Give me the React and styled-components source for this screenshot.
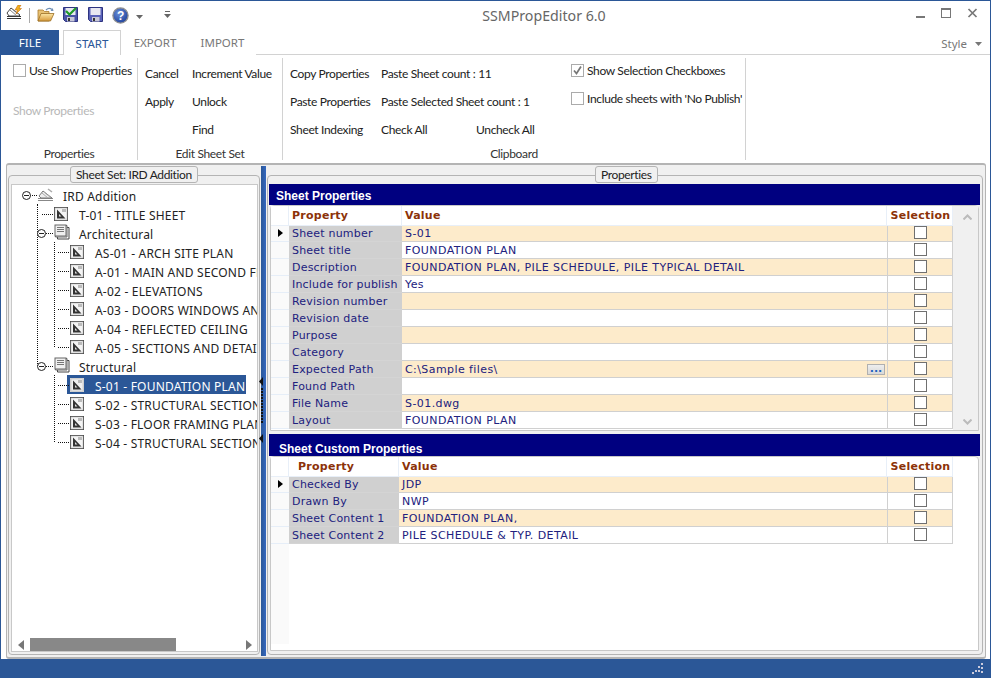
import React from "react";
import styled, { createGlobalStyle } from "styled-components";

const Global = createGlobalStyle`
  html, body { margin: 0; padding: 0; background: #fff; }
  * { box-sizing: border-box; }
`;
const UI = `Lato, "Liberation Sans", sans-serif`;
const CHROME = `"Noto Sans", "Liberation Sans", sans-serif`;
const GRID = `"DejaVu Sans", Verdana, sans-serif`;
const BLUE = "#2b5797";

const Window = styled.div`
  width: 991px; height: 678px; display: flex; flex-direction: column; overflow: hidden;
  background: #fff; border: 1px solid ${BLUE}; border-bottom: 0; font-family: ${UI}; font-size: 12px; letter-spacing: -.35px; color: #222;
`;
const TitleBar = styled.div`display: flex; align-items: flex-start; height: 29px; flex: none;`;
const Quick = styled.div`display: flex; align-items: flex-start; width: 182px; flex: none; position: relative; height: 29px;`;
const QuickIcon = styled.span`display: block; flex: none; margin-top: ${p => p.$top}px; margin-left: ${p => p.$left}px; line-height: 0;`;
const QuickSep = styled.span`width: 1px; height: 15px; background: #aaa; margin: 7px 0 0 6px; flex: none;`;
const Title = styled.div`flex: 1; text-align: center; font: 14.2px/30px ${CHROME}; letter-spacing: 0; color: #666; padding-left: 5px;`;
const Controls = styled.div`display: flex; width: 90px; flex: none; align-items: flex-start; padding-left: 15px;`;
const TabRow = styled.div`display: flex; height: 25px; flex: none; border-bottom: 1px solid #d2d2d2; align-items: stretch; font: 11.5px ${CHROME}; letter-spacing: 0;`;
const FileTab = styled.div`width: 58px; background: ${BLUE}; color: #fff; text-align: center; line-height: 25px; height: 25px;`;
const Tab = styled.div`
  line-height: 26px; height: 25px; text-align: center; width: ${p => p.$w}px; margin-left: ${p => p.$ml || 0}px;
  color: ${p => (p.$active ? "#2b5797" : "#777")};
  background: #fff;
  ${p => p.$active && `border: 1px solid #d2d2d2; border-bottom: 0;`}
`;
const StyleMenu = styled.div`margin-left: auto; display: flex; align-items: center; gap: 8px; color: #777; padding-right: 8px; height: 24px; padding-top: 3px;`;
const Ribbon = styled.div`display: flex; height: 108px; flex: none; padding-top: 3px;`;
const Group = styled.div`
  width: ${p => p.$w}px; flex: none; display: flex; flex-direction: column; height: 102px; border-right: 1px solid #d2d2d2;
`;
const GroupBody = styled.div`flex: 1; padding: ${p => p.$pad};`;
const GroupLabel = styled.div`height: 16px; line-height: 19px; text-align: center; color: #333; flex: none;`;
const ActionGrid = styled.div`display: grid; grid-template-columns: ${p => p.$cols}; grid-auto-rows: 28px;`;
const Action = styled.div`line-height: 28px; white-space: nowrap; grid-column: span ${p => p.$span || 1};`;
const CheckColumn = styled.div`grid-column: 4; grid-row: 1 / 4; display: flex; flex-direction: column; gap: 14px; padding-top: 3px;`;
const CheckRow = styled.label`display: flex; align-items: center; gap: 3px; height: 14px; white-space: nowrap;`;
const Box = styled.span`
  width: 13px; height: 13px; flex: none; display: flex; align-items: center; justify-content: center;
  background: #fff; border: 1px solid ${p => p.$dark ? "#707070" : "#ababab"};
`;
const DisabledAction = styled.div`color: #b8b8b8; margin: 27px 0 0 0; line-height: 14px;`;

const Main = styled.div`
  flex: 1; display: flex; margin: 0 4px 0 5px; background: #f0f0f0; border: 1px solid #b4b4b4; border-top-width: 2px; border-bottom-width: 2px;
  padding: 10px 0 0 1px; border-radius: 3px; height: 0;
`;
const GroupBox = styled.div`
  position: relative; flex: none; width: ${p => p.$w}px; height: 480px; border: 1px solid #b4b4b4; border-radius: 4px; display: flex; flex-direction: column;
`;
const Legend = styled.div`
  position: absolute; top: -10px; left: ${p => p.$left}px; height: 17px; padding: 0 5px; line-height: 15px;
  background: #f0f0f0; border: 1px solid #b4b4b4; border-radius: 3px; white-space: nowrap;
`;
const TreePanel = styled.div`
  margin: 8px 1px 2px 2px; flex: 1; min-height: 0; background: #fff; border: 1px solid #c8c8c8; display: flex; flex-direction: column;
  font-family: ${CHROME}; letter-spacing: .2px;
`;
const TreeScroll = styled.div`flex: 1; min-height: 0; overflow: hidden;`;
const TreeRow = styled.div`display: flex; height: 19px; padding-left: ${p => 9 + p.$level * 16}px; white-space: nowrap;`;
const Joint = styled.span`
  position: relative; width: 17px; flex: none;
  &::after { content: ""; position: absolute; left: ${p => p.$x}px; right: 1px; top: 10px; border-top: 1px dotted #111; }
`;
const Knob = styled.span`
  position: absolute; z-index: 1; left: ${p => p.$x - 4}px; top: 6px; width: 9px; height: 9px; border-radius: 50%; background: #fff; border: 1px solid #222;
  &::after { content: ""; position: absolute; left: 1px; right: 1px; top: 3px; height: 1px; background: #222; }
`;
const NodeBody = styled.span`
  display: flex; height: 19px; padding: 0 ${p => p.$sel ? "1px" : 0} 0 3px; margin-left: -3px; flex: ${p => p.$sel ? "none" : "initial"};
  background: ${p => (p.$sel ? BLUE : "transparent")}; color: ${p => (p.$sel ? "#fff" : "#222")};
`;
const NodeIcon = styled.span`width: 14px; flex: none; margin: 3px 11px 0 0; line-height: 0;`;
const NodeText = styled.span`line-height: 24px; height: 19px;`;
const Branch = styled.div`
  position: relative;
  &::before { content: ""; position: absolute; top: 0; left: ${p => p.$x}px; bottom: ${p => p.$end}px; border-left: 1px dotted #111; }
`;
const HScroll = styled.div`height: 13px; flex: none; display: flex; align-items: center; padding-left: 6px;`;
const HThumb = styled.div`width: 146px; height: 13px; background: #888; margin: 0 70px 0 6px; flex: none;`;
const Splitter = styled.div`
  position: relative; flex: none; width: 5px; height: 490px; margin: -9px 1px 0 1px;
  background: linear-gradient(90deg, #2b5797, #3568c0); display: flex; flex-direction: column; align-items: center; justify-content: center;
`;
const Grip = styled.svg`position: absolute; left: -2px; top: 210px;`;
const PropPanelBar = styled.div`
  height: ${p => p.$h}px; flex: none; margin: ${p => p.$mt}px 2px 0 1px; background: #000080; color: #fff; font: bold 12px "Liberation Sans", sans-serif; letter-spacing: 0;
  padding: ${p => p.$pt}px 0 0 ${p => p.$pl}px; line-height: 14px;
`;
const GridPanel = styled.div`
  margin: 0 3px 0 2px; background: #fff; border: 1px solid #c8c8c8; border-radius: 4px 4px 0 0; display: flex; flex: ${p => (p.$grow ? 1 : "none")}; min-height: 0;
  ${p => p.$h && `height: ${p.$h}px;`}
`;
const GridBody = styled.div`flex: none; display: flex; flex-direction: column; position: relative;`;
const GridRow = styled.div`
  display: grid; grid-template-columns: ${p => p.$cols}; height: ${p => p.$h || 17}px; font: 11px ${GRID}; letter-spacing: 0; color: #21217e;
`;
const HeadCell = styled.div`
  font-weight: bold; color: #8c3208; line-height: 19px; letter-spacing: .25px; padding-left: ${p => p.$pl || 3}px; border-right: 1px solid #e8eff8; border-bottom: 1px solid #e8eff8; background: #fff;
  ${p => p.$center && `text-align: center; padding-left: 2px;`}
  white-space: nowrap; position: relative;
`;
const RowHead = styled.div`background: #fafafa; border-bottom: 1px solid #e6eef8; display: flex; align-items: center; padding-left: 7px;`;
const PropCell = styled.div`background: #d0d0d0; line-height: 18px; letter-spacing: .2px; padding-left: 3px; white-space: nowrap; overflow: hidden; border-bottom: 1px solid #d4d4d4;`;
const ValueCell = styled.div`
  background: ${p => (p.$alt ? "#fdebcb" : "#fff")}; line-height: 18px; letter-spacing: .42px; padding: 0 2px 0 3px; border-bottom: 1px solid #d0d0d0; white-space: nowrap; overflow: hidden;
  display: flex; justify-content: space-between; align-items: flex-start;
`;
const SelCell = styled.div`
  background: ${p => (p.$alt ? "#fdebcb" : "#fff")}; border-left: 1px solid #d0d0d0; border-right: 1px solid #d0d0d0; border-bottom: 1px solid #d0d0d0; display: flex; justify-content: center; align-items: flex-start; padding: 1px 0 0 0;
`;
const EllipsisButton = styled.span`
  width: 18px; height: 11px; flex: none; margin-top: 3px; background: linear-gradient(#eee, #d8d8d8); border: 1px solid #b0b0b0; color: #1f63c0; font: bold 11px ${GRID}; line-height: 8px; text-align: center; letter-spacing: 0;
`;
const VScroll = styled.div`flex: 1; background: #f0f0f0; display: flex; flex-direction: column; justify-content: space-between; align-items: center; padding: 8px 0 5px 3px;`;
const RowStrip = styled.div`
  position: absolute; top: 87px; left: 0; width: 18px; bottom: 6px; background: #fafafa;
`;
const Status = styled.div`height: 19px; flex: none; background: ${BLUE}; display: flex; justify-content: flex-end; align-items: flex-end; padding: 0 6px 3px 0; line-height: 0;`;
const BottomGap = styled.div`height: 3px; flex: none;`;

const Chk = () => (
  <svg width="11" height="11" viewBox="0 0 11 11"><path d="M2 5.5 L4.5 8.5 L9 1.5" fill="none" stroke="#777" strokeWidth="1.7" /></svg>
);
const AppIcon = () => (
  <svg width="17" height="15" viewBox="0 0 17 15">
    <path d="M1 13.5h14M1 11.5h14" stroke="#333" strokeWidth="1" />
    <path d="M1 8 L5 3 L14 10 L13 11 H3 Z" fill="#fff" stroke="#444" />
    <path d="M4 5 L11 11 M6 4 L12 9" stroke="#888" />
    <path d="M12 0 L9 5 L11.5 5 L10 9 L15.5 3.5 L13 3.5 L15 0 Z" fill="#f0b020" stroke="#c06000" strokeWidth=".5" />
  </svg>
);
const FolderIcon = () => (
  <svg width="18" height="15" viewBox="0 0 18 15">
    <defs><linearGradient id="fg" x1="0" y1="0" x2="0" y2="1"><stop offset="0" stopColor="#fbe6a6" /><stop offset="1" stopColor="#d89a3a" /></linearGradient></defs>
    <path d="M1 3 H6 L7.5 4.5 H12 V14 H1 Z" fill="#e8c274" stroke="#a97a2c" strokeWidth=".8" />
    <path d="M1 14 L4 6.5 H17 L13.5 14 Z" fill="url(#fg)" stroke="#9a6e24" strokeWidth=".8" />
    <path d="M9 3 Q12 0 15 2.5" fill="none" stroke="#6f8fb5" strokeWidth="1.2" />
    <path d="M13.5 4 L16.5 4 L15.8 1 Z" fill="#6f8fb5" />
  </svg>
);
const Floppy = ({ check }) => (
  <svg width="15" height="15" viewBox="0 0 15 15">
    <path d="M.5 .5 H14.5 V14.5 H2.5 L.5 12.5 Z" fill={check ? "#4a54a8" : "#5a62b8"} stroke="#2d3380" />
    <rect x="2.5" y="1" width="10" height="7" fill="#e8e8f0" />
    <rect x="4" y="10" width="7.5" height="4.5" fill="#c8c8d8" />
    <rect x="5" y="11" width="2" height="3" fill="#333" />
    {check && <path d="M3 4 L6.5 7.5 L13 1" fill="none" stroke="#1f9a28" strokeWidth="2.2" />}
  </svg>
);
const HelpIcon = () => (
  <svg width="17" height="17" viewBox="0 0 17 17">
    <defs><radialGradient id="hg" cx=".4" cy=".35" r=".7"><stop offset="0" stopColor="#6a90d8" /><stop offset="1" stopColor="#1d3f9a" /></radialGradient></defs>
    <circle cx="8.5" cy="8.5" r="7.6" fill="url(#hg)" stroke="#8f8f8f" strokeWidth="1.3" />
    <text x="8.5" y="13" textAnchor="middle" fontFamily="Liberation Sans, sans-serif" fontWeight="bold" fontSize="12" fill="#fff">?</text>
  </svg>
);
const Caret = ({ c = "#666", w = 7 }) => (
  <svg width={w} height="4" viewBox="0 0 7 4"><path d="M0 0H7L3.5 4Z" fill={c} /></svg>
);
const Customize = () => (
  <svg width="7" height="7" viewBox="0 0 7 7"><path d="M1 .5H6" stroke="#666" /><path d="M0 3H7L3.5 7Z" fill="#666" /></svg>
);
const WinMin = () => <svg width="25" height="20" viewBox="0 0 25 20" style={{ display: "block" }}><rect x="1" y="15" width="9" height="2" fill="#777" /></svg>;
const WinMax = () => <svg width="27" height="20" viewBox="0 0 27 20" style={{ display: "block" }}><rect x="1.5" y="7.5" width="9" height="9" fill="none" stroke="#777" /><rect x="1" y="7" width="10" height="2" fill="#777" /></svg>;
const WinClose = () => <svg width="12" height="20" viewBox="0 0 12 20" style={{ display: "block" }}><path d="M1.5 8 L9.5 16 M9.5 8 L1.5 16" stroke="#777" strokeWidth="1.7" /></svg>;
const SheetIcon = ({ sel }) => (
  <svg width="14" height="14" viewBox="0 0 14 14">
    <rect x=".5" y=".5" width="13" height="13" fill="#f4f4f4" stroke={sel ? "#d8d8d8" : "#444"} />
    <rect x="1" y="1" width="12" height="12" fill={sel ? "#f0f0f0" : "#f4f4f4"} stroke="#bbb" strokeWidth=".6" />
    <path d="M3 2.5 V11.5 H11.5 Z" fill="#333" />
    <path d="M5 7 V9.5 H7.5 Z" fill="#ddd" />
    <rect x="8" y="2" width="4" height="3" fill="#bbb" />
  </svg>
);
const StackIcon = () => (
  <svg width="16" height="16" viewBox="0 0 16 16" style={{ marginTop: -2 }}>
    <path d="M3.5 3.5 H15 V15 H3.5 Z" fill="#fff" stroke="#444" />
    <path d="M1.5 1.5 H13 V13 H1.5 Z" fill="#fff" stroke="#666" />
    <rect x="1" y="1" width="11" height="11" fill="#f0f0f0" stroke="#666" />
    <path d="M3 3.5 H10 M3 5.5 H10 M3 7.5 H10" stroke="#777" />
  </svg>
);
const RootIcon = () => (
  <svg width="16" height="14" viewBox="0 0 16 14">
    <path d="M0 12.5H15M0 10.5H15" stroke="#888" />
    <path d="M1 8 L5 3 L14 10 H3 Z" fill="#eee" stroke="#777" />
    <path d="M4 5 L10 10 M6 4 L12 9" stroke="#aaa" />
    <path d="M10 1 L14 4" stroke="#aaa" strokeWidth="1.5" />
  </svg>
);
const Arrow = ({ dir }) => (
  <svg width="6" height="10" viewBox="0 0 6 10" style={{ flex: "none" }}><path d={dir === "left" ? "M6 0V10L0 5Z" : "M0 0V10L6 5Z"} fill="#777" /></svg>
);
const Chev = ({ up }) => (
  <svg width="9" height="6" viewBox="0 0 9 6"><path d={up ? "M.5 5.5 L4.5 1.5 L8.5 5.5" : "M.5 .5 L4.5 4.5 L8.5 .5"} fill="none" stroke="#bbb" strokeWidth="2" /></svg>
);
const RowMark = () => <svg width="5" height="8" viewBox="0 0 5 8"><path d="M0 0V8L5 4Z" fill="#000" /></svg>;

const archSheets = ["AS-01 - ARCH SITE PLAN", "A-01 - MAIN AND SECOND FLOOR PLANS", "A-02 - ELEVATIONS", "A-03 - DOORS WINDOWS AND DETAILS", "A-04 - REFLECTED CEILING", "A-05 - SECTIONS AND DETAILS"];
const structSheets = ["S-01 - FOUNDATION PLAN", "S-02 - STRUCTURAL SECTIONS", "S-03 - FLOOR FRAMING PLAN", "S-04 - STRUCTURAL SECTIONS"];

const SheetNode = ({ level, name, sel }) => (
  <TreeRow $level={level}>
    <Joint $x={5} />
    <NodeBody $sel={sel}>
      <NodeIcon><SheetIcon sel={sel} /></NodeIcon>
      <NodeText>{name}</NodeText>
    </NodeBody>
  </TreeRow>
);
const GroupNode = ({ level, name, icon, x }) => (
  <TreeRow $level={level}>
    <Joint $x={x}><Knob $x={x} /></Joint>
    <NodeBody>
      <NodeIcon>{icon}</NodeIcon>
      <NodeText>{name}</NodeText>
    </NodeBody>
  </TreeRow>
);

const sheetProps = [
  ["Sheet number", "S-01"],
  ["Sheet title", "FOUNDATION PLAN"],
  ["Description", "FOUNDATION PLAN, PILE SCHEDULE, PILE TYPICAL DETAIL"],
  ["Include for publish", "Yes"],
  ["Revision number", ""],
  ["Revision date", ""],
  ["Purpose", ""],
  ["Category", ""],
  ["Expected Path", "C:\\Sample files\\", true],
  ["Found Path", ""],
  ["File Name", "S-01.dwg"],
  ["Layout", "FOUNDATION PLAN"],
];
const customProps = [
  ["Checked By", "JDP"],
  ["Drawn By", "NWP"],
  ["Sheet Content 1", "FOUNDATION PLAN,"],
  ["Sheet Content 2", "PILE SCHEDULE & TYP. DETAIL"],
];
const topCols = "18px 113px 485px 66px";
const customCols = "18px 110px 488px 66px";

const DataRows = ({ rows, cols }) => rows.map(([k, v, more], i) => (
  <GridRow $cols={cols} key={k}>
    <RowHead>{i === 0 && <RowMark />}</RowHead>
    <PropCell>{k}</PropCell>
    <ValueCell $alt={i % 2 === 0}>{v}{more && <EllipsisButton>...</EllipsisButton>}</ValueCell>
    <SelCell $alt={i % 2 === 0}><Box $dark /></SelCell>
  </GridRow>
));

export default function App() {
  return (
    <>
      <Global />
      <Window>
        <TitleBar>
          <Quick>
            <QuickIcon $top={4} $left={5}><AppIcon /></QuickIcon>
            <QuickSep />
            <QuickIcon $top={6} $left={7}><FolderIcon /></QuickIcon>
            <QuickIcon $top={6} $left={8}><Floppy check /></QuickIcon>
            <QuickIcon $top={6} $left={10}><Floppy /></QuickIcon>
            <QuickIcon $top={6} $left={9}><HelpIcon /></QuickIcon>
            <QuickIcon $top={14} $left={7}><Caret /></QuickIcon>
            <QuickIcon $top={10} $left={21}><Customize /></QuickIcon>
          </Quick>
          <Title>SSMPropEditor 6.0</Title>
          <Controls><WinMin /><WinMax /><WinClose /></Controls>
        </TitleBar>
        <TabRow>
          <FileTab>FILE</FileTab>
          <Tab $active $w={58} $ml={4}>START</Tab>
          <Tab $w={68}>EXPORT</Tab>
          <Tab $w={67}>IMPORT</Tab>
          <StyleMenu>Style <Caret c="#777" /></StyleMenu>
        </TabRow>
        <Ribbon>
          <Group $w={137}>
            <GroupBody $pad="5px 0 0 12px">
              <CheckRow><Box /><span>Use Show Properties</span></CheckRow>
              <DisabledAction>Show Properties</DisabledAction>
            </GroupBody>
            <GroupLabel>Properties</GroupLabel>
          </Group>
          <Group $w={145}>
            <GroupBody $pad="2px 0 0 7px">
              <ActionGrid $cols="47px 1fr">
                <Action>Cancel</Action><Action>Increment Value</Action>
                <Action>Apply</Action><Action>Unlock</Action>
                <span /><Action>Find</Action>
              </ActionGrid>
            </GroupBody>
            <GroupLabel>Edit Sheet Set</GroupLabel>
          </Group>
          <Group $w={463}>
            <GroupBody $pad="2px 0 0 7px">
              <ActionGrid $cols="91px 95px 95px 1fr">
                <Action>Copy Properties</Action><Action $span={2}>Paste Sheet count : 11</Action>
                <CheckColumn>
                  <CheckRow><Box><Chk /></Box><span>Show Selection Checkboxes</span></CheckRow>
                  <CheckRow><Box /><span>Include sheets with 'No Publish'</span></CheckRow>
                </CheckColumn>
                <Action>Paste Properties</Action><Action $span={2}>Paste Selected Sheet count : 1</Action>
                <Action>Sheet Indexing</Action><Action>Check All</Action><Action>Uncheck All</Action>
              </ActionGrid>
            </GroupBody>
            <GroupLabel>Clipboard</GroupLabel>
          </Group>
        </Ribbon>
        <Main>
          <GroupBox $w={252}>
            <Legend $left={61}>Sheet Set: IRD Addition</Legend>
            <TreePanel>
              <TreeScroll>
                <GroupNode level={0} x={5} name="IRD Addition" icon={<RootIcon />} />
                <Branch $x={25} $end={85}>
                  <SheetNode level={1} name="T-01 - TITLE SHEET" />
                  <GroupNode level={1} x={4} name="Architectural" icon={<StackIcon />} />
                  <Branch $x={42} $end={9}>
                    {archSheets.map(n => <SheetNode key={n} level={2} name={n} />)}
                  </Branch>
                  <GroupNode level={1} x={4} name="Structural" icon={<StackIcon />} />
                  <Branch $x={42} $end={9}>
                    {structSheets.map((n, i) => <SheetNode key={n + i} level={2} name={n} sel={i === 0} />)}
                  </Branch>
                </Branch>
              </TreeScroll>
              <HScroll>
                <Arrow dir="left" />
                <HThumb />
                <Arrow dir="right" />
              </HScroll>
            </TreePanel>
          </GroupBox>
          <Splitter>
            <Grip width="6" height="68" viewBox="0 0 6 68">
              <path d="M4 1V10L0 5.5Z" fill="#111" />
              {Array.from({ length: 12 }, (_, i) => <rect key={i} x="2" y={12 + i * 3} width="2" height="2" fill="#111" />)}
              <path d="M4 58V67L0 62.5Z" fill="#111" />
            </Grip>
          </Splitter>
          <GroupBox $w={716}>
            <Legend $left={327}>Properties</Legend>
            <PropPanelBar $h={21} $mt={8} $pt={5} $pl={7}>Sheet Properties</PropPanelBar>
            <GridPanel $h={226}>
              <GridBody>
                <GridRow $cols={topCols} $h={19}>
                  <HeadCell /><HeadCell>Property</HeadCell><HeadCell>Value</HeadCell><HeadCell $center>Selection</HeadCell>
                </GridRow>
                <DataRows rows={sheetProps} cols={topCols} />
              </GridBody>
              <VScroll><Chev up /><Chev /></VScroll>
            </GridPanel>
            <PropPanelBar $h={22} $mt={3} $pt={8} $pl={10}>Sheet Custom Properties</PropPanelBar>
            <GridPanel $grow>
              <GridBody>
                <GridRow $cols={customCols} $h={19}>
                  <HeadCell /><HeadCell $pl={9}>Property</HeadCell><HeadCell>Value</HeadCell><HeadCell $center>Selection</HeadCell>
                </GridRow>
                <DataRows rows={customProps} cols={customCols} />
                <RowStrip />
              </GridBody>
            </GridPanel>
            <BottomGap />
          </GroupBox>
        </Main>
        <Status>
          <svg width="12" height="12" viewBox="0 0 12 12">
            <g fill="#ccd"><rect x="9" y="0" width="2" height="2" /><rect x="6" y="3" width="2" height="2" /><rect x="9" y="4" width="2" height="2" /><rect x="3" y="7" width="2" height="2" /><rect x="6" y="7" width="2" height="2" /><rect x="9" y="8" width="2" height="2" /><rect x="0" y="9" width="2" height="2" /></g>
          </svg>
        </Status>
      </Window>
    </>
  );
}
